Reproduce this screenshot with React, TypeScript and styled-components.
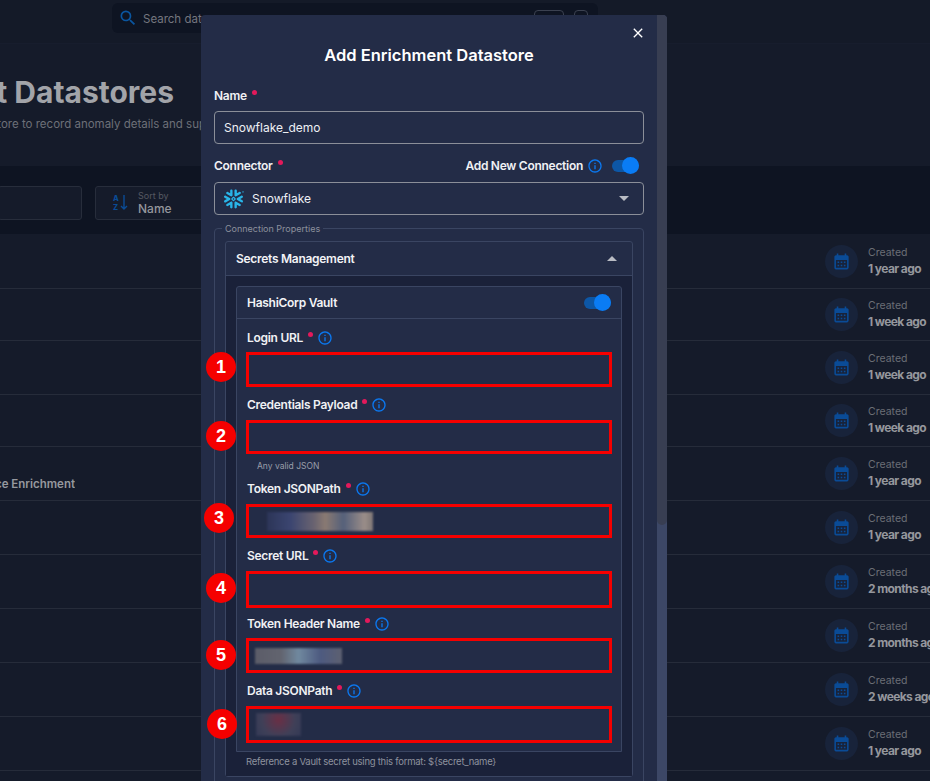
import React from "react";
import styled, { createGlobalStyle } from "styled-components";
import { MdCalendarMonth, MdClose, MdInfoOutline, MdSearch } from "react-icons/md";
import { SiSnowflake } from "react-icons/si";

const Global = createGlobalStyle`
  html, body { margin: 0; padding: 0; background: #151b2a; }
  * { box-sizing: border-box; }
  body { font-family: Inter, "Noto Sans", sans-serif; overflow: hidden; }
`;

const Page = styled.div`
  position: relative;
  width: 930px;
  height: 781px;
  overflow: hidden;
  background: #151b2a;
`;

const TopBar = styled.div`
  height: 44px;
  padding: 3px 332px 0 112px;
  border-bottom: 1px solid #171d2d;
  background: #141a28;
`;

const SearchBox = styled.div`
  height: 30px;
  display: flex;
  align-items: center;
  padding-left: 6px;
  gap: 5px;
  border-radius: 6px;
  background: #0e1422;
  color: #0a559f;
  font-size: 11.5px;
`;

const SearchText = styled.span`
  flex: 1;
  margin-top: 2px;
  color: #74767f;
`;

const KeyHint = styled.span<{ $w: number; $mr: number }>`
  width: ${(p) => p.$w}px;
  height: 18px;
  margin-right: ${(p) => p.$mr}px;
  margin-top: 2px;
  border: 1px solid #3b4150;
  border-radius: 4px;
`;

const Hero = styled.div`
  height: 122px;
  padding-top: 30px;
`;

const HeroTitle = styled.div`
  width: 174px;
  height: 36px;
  display: flex;
  justify-content: flex-end;
  overflow: hidden;
  white-space: nowrap;
  color: #a2a4a9;
  font-size: 30px;
  line-height: 36px;
  font-weight: 700;
`;

const HeroSub = styled.div`
  width: 206px;
  height: 16px;
  margin-top: 6px;
  display: flex;
  justify-content: flex-end;
  overflow: hidden;
  white-space: nowrap;
  color: #6d7078;
  font-size: 11.5px;
  line-height: 16px;
`;

const Band = styled.div`
  height: 68px;
  padding-top: 20px;
  display: flex;
  gap: 13px;
  background: #0e1422;
`;

const BandBox = styled.div<{ $w: number; $ml?: number }>`
  width: ${(p) => p.$w}px;
  height: 34px;
  margin-left: ${(p) => p.$ml ?? 0}px;
  flex: none;
  display: flex;
  align-items: center;
  border: 1px solid #272d3b;
  border-radius: 3px;
  background: #151b2a;
`;

const SortGlyph = styled.div`
  width: 42px;
  padding-left: 17px;
  display: flex;
  align-items: center;
  gap: 1px;
  color: #0a4b96;
`;

const SortLetters = styled.div`
  display: flex;
  flex-direction: column;
  font-size: 7.5px;
  line-height: 9px;
  font-weight: 800;
`;

const SortCol = styled.div`
  display: flex;
  flex-direction: column;
`;

const SortSmall = styled.span`
  color: #565962;
  font-size: 9px;
  line-height: 11px;
`;

const SortValue = styled.span`
  color: #94969c;
  font-size: 12px;
  line-height: 15px;
  font-weight: 500;
`;

const Rows = styled.div`
  padding-top: 1px;
  display: flex;
  flex-direction: column;
`;

const Row = styled.div<{ $h: number }>`
  height: ${(p) => p.$h}px;
  padding-left: 825px;
  display: flex;
  align-items: center;
  gap: 10px;
  border-bottom: 1px solid #262c3a;
  position: relative;
`;

const RowName = styled.div`
  position: absolute;
  left: 0;
  top: 20px;
  bottom: 0;
  width: 75px;
  display: flex;
  align-items: center;
  justify-content: flex-end;
  overflow: hidden;
  white-space: nowrap;
  color: #96989e;
  font-size: 11.5px;
  font-weight: 600;
`;

const CalCircle = styled.div`
  flex: none;
  width: 33px;
  height: 33px;
  display: flex;
  align-items: center;
  justify-content: center;
  border-radius: 50%;
  background: #18233a;
  color: #0a4b96;
`;

const CreatedCol = styled.div`
  margin-top: -1px;
  display: flex;
  flex-direction: column;
  white-space: nowrap;
`;

const CreatedLabel = styled.span`
  color: #6b6e76;
  font-size: 10.5px;
  line-height: 15px;
`;

const CreatedValue = styled.span`
  color: #95979d;
  font-size: 12px;
  line-height: 17px;
  font-weight: 700;
  letter-spacing: -0.6px;
`;

const Modal = styled.div`
  position: absolute;
  left: 201px;
  top: 15px;
  width: 466px;
  height: 766px;
  display: flex;
  overflow: hidden;
  border-radius: 4px 4px 0 0;
  background: #232c47;
`;

const ModalBody = styled.div`
  position: relative;
  width: 456px;
  padding: 30px 13px 0;
  color: #f2f3f6;
`;

const ScrollTrack = styled.div`
  width: 10px;
  background: #3c4766;
  border-radius: 0 4px 0 0;
`;

const ScrollThumb = styled.div`
  height: 510px;
  background: #383e52;
  border-radius: 0 4px 5px 5px;
`;

const CloseBtn = styled.button`
  position: absolute;
  right: 11px;
  top: 10px;
  padding: 0;
  display: flex;
  border: 0;
  background: none;
  color: #fff;
`;

const Title = styled.h2`
  margin: 0;
  height: 20px;
  text-align: center;
  color: #fff;
  font-size: 16.5px;
  line-height: 20px;
  font-weight: 600;
`;

const LabelRow = styled.div<{ $gap: number }>`
  height: 16px;
  margin-top: ${(p) => p.$gap}px;
  display: flex;
  align-items: center;
  font-size: 12px;
  line-height: 16px;
  font-weight: 600;
  letter-spacing: -0.28px;
  color: #f0f1f4;
`;

const Dot = styled.i`
  width: 5px;
  height: 5px;
  margin: -8px 0 0 5px;
  border-radius: 50%;
  background: #e3195b;
`;

const InfoMark = styled(MdInfoOutline)`
  flex: none;
  margin-left: 4px;
  margin-top: -1px;
  color: #0b78f0;
`;

const TextInput = styled.div<{ $gap: number }>`
  height: 33px;
  margin-top: ${(p) => p.$gap}px;
  padding-left: 9px;
  display: flex;
  align-items: center;
  gap: 8px;
  border: 1px solid #8b8f99;
  border-radius: 4px;
  font-size: 12px;
  color: #eef0f4;
`;

const Spacer = styled.span`
  flex: 1;
`;

const Caret = styled.i<{ $up?: boolean }>`
  width: 0;
  height: 0;
  border-left: 5px solid transparent;
  border-right: 5px solid transparent;
  ${(p) => (p.$up ? "border-bottom" : "border-top")}: 5px solid #b9bcc4;
`;

const SelectCaret = styled(Caret)`
  margin-right: 14px;
`;

const Toggle = styled.div<{ $ml: number; $mr: number }>`
  position: relative;
  width: 27px;
  height: 12px;
  margin-left: ${(p) => p.$ml}px;
  margin-right: ${(p) => p.$mr}px;
  border-radius: 6px;
  background: #0d57a6;
`;

const ToggleThumb = styled.i`
  position: absolute;
  right: 0;
  top: -3px;
  width: 17px;
  height: 17px;
  border-radius: 50%;
  background: #0a7cf5;
`;

const Props = styled.div`
  position: relative;
  margin-top: 13px;
  padding: 12px 10px 40px;
  border: 1px solid #3a4562;
  border-radius: 4px;
`;

const Legend = styled.span`
  position: absolute;
  left: 7px;
  top: -6px;
  padding: 0 3px;
  background: #232c47;
  color: #8d919d;
  font-size: 9px;
  line-height: 11px;
`;

const Accordion = styled.div`
  border: 1px solid #3a4562;
  border-radius: 3px;
`;

const AccordionHead = styled.div`
  height: 34px;
  padding: 0 15px 0 10px;
  display: flex;
  align-items: center;
  justify-content: space-between;
  border-bottom: 1px solid #3a4562;
  font-size: 12px;
  font-weight: 600;
  letter-spacing: -0.28px;
`;

const AccordionBody = styled.div`
  padding: 10px 10px 8px;
  background: #1a2139;
`;

const Card = styled.div`
  padding-bottom: 8px;
  border: 1px solid #3a4562;
  border-radius: 3px 3px 0 0;
  background: #232c47;
`;

const CardHead = styled.div`
  height: 32px;
  padding: 0 10px;
  display: flex;
  align-items: center;
  justify-content: space-between;
  border-bottom: 1px solid #3a4562;
  font-size: 12px;
  font-weight: 600;
  letter-spacing: -0.28px;
`;

const Fields = styled.div`
  padding: 0 9px;
`;

const Field = styled.div`
  position: relative;
`;

const VaultLabel = styled(LabelRow)`
  padding-left: 1px;
`;

const MarkedBox = styled.div<{ $h: number; $gap: number }>`
  height: ${(p) => p.$h}px;
  margin-top: ${(p) => p.$gap}px;
  display: flex;
  align-items: center;
  border: 3px solid #f50000;
`;

const Blurred = styled.div<{ $ml: number; $w: number; $h: number; $bg: string }>`
  width: ${(p) => p.$w}px;
  height: ${(p) => p.$h}px;
  margin-left: ${(p) => p.$ml}px;
  background: ${(p) => p.$bg};
  filter: blur(1px);
`;

const Hint = styled.div`
  height: 12px;
  margin-top: 6px;
  padding-left: 11px;
  color: #9a9ea9;
  font-size: 8.5px;
  line-height: 12px;
`;

const Footnote = styled.div`
  margin-top: 4px;
  padding-left: 10px;
  color: #8e929e;
  font-size: 9.5px;
  line-height: 12px;
  letter-spacing: -0.25px;
`;

const Badge = styled.div<{ $x: number; $y: number }>`
  position: absolute;
  left: ${(p) => p.$x}px;
  bottom: ${(p) => p.$y}px;
  width: 30px;
  height: 30px;
  display: flex;
  align-items: center;
  justify-content: center;
  border-radius: 50%;
  background: #f50000;
  color: #fff;
  font-family: "Liberation Sans", Arial, sans-serif;
  font-size: 18px;
  font-weight: 700;
`;

const rows: { h: number; v: string; name?: string }[] = [
  { h: 54, v: "1 year ago" },
  { h: 52, v: "1 week ago" },
  { h: 54, v: "1 week ago" },
  { h: 52, v: "1 week ago" },
  { h: 54, v: "1 year ago", name: "Insurance Enrichment" },
  { h: 54, v: "1 year ago" },
  { h: 54, v: "2 months ago" },
  { h: 54, v: "2 months ago" },
  { h: 54, v: "2 weeks ago" },
  { h: 54, v: "1 year ago" },
];

type F = {
  label: string;
  n: number;
  gap: number;
  boxGap: number;
  h: number;
  bx: number;
  by: number;
  blur?: { ml: number; w: number; h: number; bg: string };
  hint?: string;
};

const fields: F[] = [
  { label: "Login URL", n: 1, gap: 11, boxGap: 6, h: 35, bx: -40, by: 5 },
  { label: "Credentials Payload", n: 2, gap: 10, boxGap: 7, h: 34, bx: -40, by: 21, hint: "Any valid JSON" },
  {
    label: "Token JSONPath", n: 3, gap: 9, boxGap: 7, h: 34, bx: -42, by: 5,
    blur: { ml: 18, w: 106, h: 19, bg: "linear-gradient(90deg,#2c3558,#3b4570 22%,#6b6470 45%,#8a7a72 55%,#55607a 72%,#9a8d88 92%,#7d7676)" },
  },
  { label: "Secret URL", n: 4, gap: 10, boxGap: 7, h: 37, bx: -40, by: 5 },
  {
    label: "Token Header Name", n: 5, gap: 8, boxGap: 6, h: 35, bx: -40, by: 3,
    blur: { ml: 6, w: 87, h: 16, bg: "linear-gradient(90deg,#5b5c68,#62646f 30%,#70899f 50%,#4d5a80 75%,#5d6070)" },
  },
  {
    label: "Data JSONPath", n: 6, gap: 10, boxGap: 7, h: 37, bx: -39, by: 4,
    blur: { ml: 7, w: 45, h: 23, bg: "radial-gradient(circle at 50% 30%,#6a2f45,#3f4058 60%,#333955)" },
  },
];

export default function App() {
  return (
    <Page>
      <Global />
      <TopBar>
        <SearchBox>
          <MdSearch size={20} />
          <SearchText>Search data</SearchText>
          <KeyHint $w={30} $mr={5} />
          <KeyHint $w={14} $mr={10} />
        </SearchBox>
      </TopBar>
      <Hero>
        <HeroTitle>Enrichment Datastores</HeroTitle>
        <HeroSub>Connect an enrichment datastore to record anomaly details and sup</HeroSub>
      </Hero>
      <Band>
        <BandBox $w={84} $ml={-2} />
        <BandBox $w={400}>
          <SortGlyph>
            <SortLetters>
              <span>A</span>
              <span>Z</span>
            </SortLetters>
            <svg width="8" height="16" viewBox="0 0 8 16" fill="none" stroke="currentColor" strokeWidth="1.4">
              <path d="M4 0v14M1 11l3 3 3-3" />
            </svg>
          </SortGlyph>
          <SortCol>
            <SortSmall>Sort by</SortSmall>
            <SortValue>Name</SortValue>
          </SortCol>
        </BandBox>
      </Band>
      <Rows>
        {rows.map((r, i) => (
          <Row key={i} $h={r.h}>
            {r.name && <RowName>{r.name}</RowName>}
            <CalCircle>
              <MdCalendarMonth size={19} />
            </CalCircle>
            <CreatedCol>
              <CreatedLabel>Created</CreatedLabel>
              <CreatedValue>{r.v}</CreatedValue>
            </CreatedCol>
          </Row>
        ))}
      </Rows>

      <Modal>
        <ModalBody>
          <CloseBtn>
            <MdClose size={16} />
          </CloseBtn>
          <Title>Add Enrichment Datastore</Title>
          <LabelRow $gap={23}>
            Name
            <Dot />
          </LabelRow>
          <TextInput $gap={7}>Snowflake_demo</TextInput>
          <LabelRow $gap={14}>
            Connector
            <Dot />
            <Spacer />
            Add New Connection
            <InfoMark size={16} />
            <Toggle $ml={9} $mr={5}>
              <ToggleThumb />
            </Toggle>
          </LabelRow>
          <TextInput $gap={8}>
            <SiSnowflake size={20} color="#29b5e8" />
            <span>Snowflake</span>
            <Spacer />
            <SelectCaret />
          </TextInput>
          <Props>
            <Legend>Connection Properties</Legend>
            <Accordion>
              <AccordionHead>
                Secrets Management
                <Caret $up />
              </AccordionHead>
              <AccordionBody>
                <Card>
                  <CardHead>
                    HashiCorp Vault
                    <Toggle $ml={0} $mr={0}>
                      <ToggleThumb />
                    </Toggle>
                  </CardHead>
                  <Fields>
                    {fields.map((f) => (
                      <Field key={f.n}>
                        <VaultLabel $gap={f.gap}>
                          {f.label}
                          <Dot />
                          <InfoMark size={16} />
                        </VaultLabel>
                        <MarkedBox $h={f.h} $gap={f.boxGap}>
                          {f.blur && <Blurred $ml={f.blur.ml} $w={f.blur.w} $h={f.blur.h} $bg={f.blur.bg} />}
                        </MarkedBox>
                        <Badge $x={f.bx} $y={f.by}>
                          {f.n}
                        </Badge>
                        {f.hint && <Hint>{f.hint}</Hint>}
                      </Field>
                    ))}
                  </Fields>
                </Card>
                <Footnote>Reference a Vault secret using this format: {"${secret_name}"}</Footnote>
              </AccordionBody>
            </Accordion>
          </Props>
        </ModalBody>
        <ScrollTrack>
          <ScrollThumb />
        </ScrollTrack>
      </Modal>
    </Page>
  );
}
